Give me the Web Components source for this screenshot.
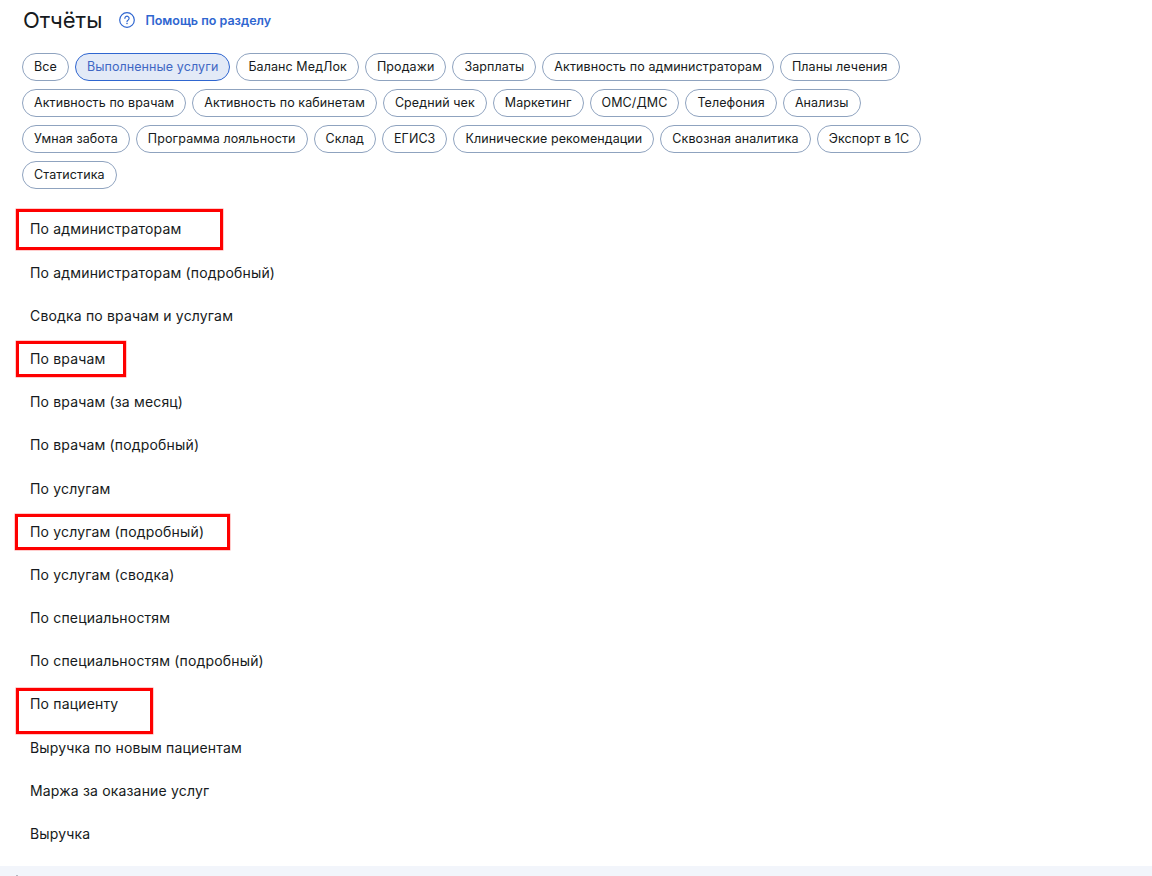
<!DOCTYPE html>
<html lang="ru">
<head>
<meta charset="utf-8">
<title>Отчёты</title>
<style>
    html, body { margin: 0; height: 100%; background: #fff; overflow: hidden; }
    body { font-family: Inter, "Liberation Sans", sans-serif; color: #161a20; }
</style>
</head>
<body>
<reports-page></reports-page>

<script>
const TABS = ['Все', 'Выполненные услуги', 'Баланс МедЛок', 'Продажи', 'Зарплаты', 'Активность по администраторам', 'Планы лечения',
    'Активность по врачам', 'Активность по кабинетам', 'Средний чек', 'Маркетинг', 'ОМС/ДМС', 'Телефония', 'Анализы',
    'Умная забота', 'Программа лояльности', 'Склад', 'ЕГИСЗ', 'Клинические рекомендации', 'Сквозная аналитика', 'Экспорт в 1С',
    'Статистика'];

// w, h, top, left of red marks drawn over the list
const REPORTS = [
    ['По администраторам', [207, 41, 1.7, 15.5]],
    ['По администраторам (подробный)'],
    ['Сводка по врачам и услугам'],
    ['По врачам', [110.5, 36, 4.1, 15.5]],
    ['По врачам (за месяц)'],
    ['По врачам (подробный)'],
    ['По услугам'],
    ['По услугам (подробный)', [215, 36, 4.3, 15]],
    ['По услугам (сводка)'],
    ['По специальностям'],
    ['По специальностям (подробный)'],
    ['По пациенту', [137, 46, 5.5, 15.5]],
    ['Выручка по новым пациентам'],
    ['Маржа за оказание услуг'],
    ['Выручка']
];

class ReportChip extends HTMLElement {
    connectedCallback() {
        this.attachShadow({ mode: 'open' });
        this.shadowRoot.innerHTML = `
            <style>
                :host {
                    display: inline-flex;
                    align-items: center;
                    box-sizing: border-box;
                    height: 28px;
                    padding: 0 11px 2px;
                    border: 1px solid #8fa3bf;
                    border-radius: 14px;
                    background: #fff;
                    color: #161a20;
                    font-size: 12.5px;
                    letter-spacing: 0.09px;
                    white-space: nowrap;
                }
                :host([active]) {
                    background: #e3eaf7;
                    border-color: #2f66d0;
                    color: #3f67c4;
                }
            </style>
            <slot></slot>
        `;
    }
}

class ReportRow extends HTMLElement {
    connectedCallback() {
        this.attachShadow({ mode: 'open' });
        const mark = this.hasAttribute('mark') ? this.getAttribute('mark').split(',') : null;
        this.shadowRoot.innerHTML = `
            <style>
                :host {
                    display: flex;
                    align-items: center;
                    position: relative;
                    height: 43.2px;
                    padding-left: 30px;
                    font-size: 14px;
                    letter-spacing: 0.17px;
                    color: #161a20;
                }
                .mark {
                    position: absolute;
                    box-sizing: border-box;
                    border: 3px solid #fe0000;
                    box-shadow: 0 0 0 .5px rgba(255, 0, 0, .4);
                }
            </style>
            <slot></slot>
            ${mark ? `<div class="mark" style="width:${mark[0]}px;height:${mark[1]}px;top:${mark[2]}px;left:${mark[3]}px"></div>` : ''}
        `;
    }
}

class ReportsHeader extends HTMLElement {
    connectedCallback() {
        this.attachShadow({ mode: 'open' });
        this.shadowRoot.innerHTML = `
            <style>
                :host {
                    display: flex;
                    align-items: center;
                    height: 40px;
                    padding-left: 23px;
                }
                h1 {
                    margin: 0 17px 0 0;
                    font-size: 22px;
                    font-weight: 400;
                    color: #161a20;
                }
                a {
                    margin-left: 10px;
                    font-size: 12.5px;
                    font-weight: 600;
                    color: #2f66d0;
                    text-decoration: none;
                }
                svg { display: block; }
            </style>
            <h1>Отчёты</h1>
            <svg width="16" height="16" viewBox="0 0 16 16" fill="none" stroke="#2f66d0">
                <circle cx="8" cy="8" r="7.3" stroke-width="1.2"/>
                <path d="M5.9 6.3a2.1 2.1 0 1 1 3.3 1.7c-.8.5-1.2.9-1.2 1.7" stroke-width="1.2" stroke-linecap="round"/>
                <circle cx="8" cy="11.6" r=".5" fill="#2f66d0" stroke-width=".5"/>
            </svg>
            <a href="#">Помощь по разделу</a>
        `;
    }
}

class ReportsPage extends HTMLElement {
    connectedCallback() {
        this.attachShadow({ mode: 'open' });
        const chips = TABS.map((t, i) => `<report-chip ${i === 1 ? 'active' : ''}>${t}</report-chip>`).join('');
        const rows = REPORTS.map(([t, m]) => `<report-row ${m ? `mark="${m.join(',')}"` : ''}>${t}</report-row>`).join('');
        this.shadowRoot.innerHTML = `
            <style>
                :host {
                    display: flex;
                    flex-direction: column;
                    height: 876px;
                }
                .tabs {
                    display: flex;
                    flex-wrap: wrap;
                    gap: 8px 6px;
                    width: 930px;
                    margin: 13px 0 0 22px;
                }
                .list {
                    flex: 1;
                    margin-top: 18.3px;
                }
                .band {
                    position: relative;
                    height: 10px;
                    background: #f2f5fb;
                }
                /* tip of something cut off by the bottom of the window */
                .band i {
                    position: absolute;
                    left: 16px;
                    bottom: 0;
                    width: 2px;
                    height: 1px;
                    background: #b4b8c0;
                }
            </style>
            <reports-header></reports-header>
            <div class="tabs">${chips}</div>
            <div class="list">${rows}</div>
            <div class="band"><i></i></div>
        `;
    }
}

customElements.define('report-chip', ReportChip);
customElements.define('report-row', ReportRow);
customElements.define('reports-header', ReportsHeader);
customElements.define('reports-page', ReportsPage);
</script>
</body>
</html>
